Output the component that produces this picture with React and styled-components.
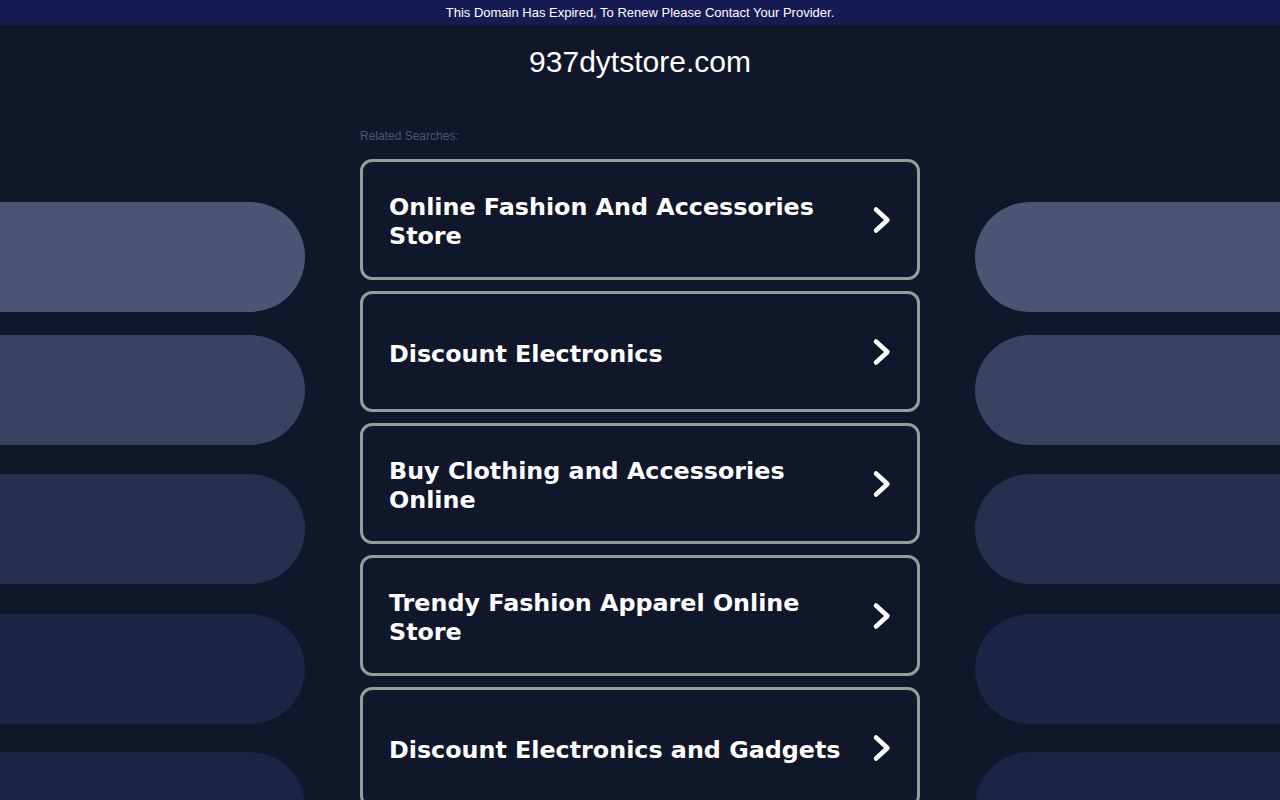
import styled, { createGlobalStyle } from "styled-components";

const GlobalStyle = createGlobalStyle`
  html, body {
    margin: 0;
    padding: 0;
    overflow: hidden;
    background: #11172b;
  }
  * {
    box-sizing: border-box;
  }
`;

const Page = styled.div`
  width: 1280px;
  min-height: 800px;
  background: #11172b;
  font-family: "Liberation Sans", Arial, sans-serif;
`;

const Banner = styled.div`
  height: 25px;
  line-height: 25px;
  background: #161b54;
  color: #ffffff;
  text-align: center;
  font-family: "Liberation Sans", Arial, sans-serif;
  font-size: 13px;
`;

const Title = styled.h1`
  margin: 0;
  padding-top: 19px;
  height: 55px;
  line-height: 36px;
  text-align: center;
  font-size: 30px;
  font-weight: normal;
  color: #ffffff;
`;

const Layout = styled.div`
  display: grid;
  grid-template-columns: 305px 1fr 305px;
  column-gap: 55px;
`;

const Side = styled.div`
  display: flex;
  flex-direction: column;
  padding-top: 122px;
`;

const Pill = styled.div`
  height: 110px;
  margin-top: ${(p) => p.$gap}px;
  background: ${(p) => p.$color};
  border-radius: ${(p) => (p.$right ? "55px 0 0 55px" : "0 55px 55px 0")};
`;

const Center = styled.main`
  display: flex;
  flex-direction: column;
  padding-top: 49px;
`;

const Label = styled.div`
  font-size: 12px;
  line-height: 14px;
  color: #4b5573;
  margin-bottom: 16px;
`;

const Cards = styled.ul`
  list-style: none;
  margin: 0;
  padding: 0;
  display: flex;
  flex-direction: column;
  gap: 11px;
`;

const Card = styled.li`
  height: 121px;
  border: 3px solid #9a9a9a;
  border-radius: 12px;
  display: flex;
  align-items: center;
  padding: 0 26px 0 26px;
  gap: 20px;
`;

const CardText = styled.span`
  flex: 1;
  padding-top: 5px;
  font-family: "DejaVu Sans", Verdana, sans-serif;
  font-weight: bold;
  font-size: 23.8px;
  line-height: 29px;
  color: #ffffff;
`;

const Chevron = () => (
  <svg width="20" height="30" viewBox="0 0 20 30">
    <path
      d="M5 4.5 L16.5 15 L5 25.5"
      fill="none"
      stroke="#ffffff"
      strokeWidth="4.5"
      strokeLinecap="round"
      strokeLinejoin="round"
    />
  </svg>
);

const pills = [
  { color: "#4b5573", gap: 0 },
  { color: "#394260", gap: 23 },
  { color: "#262f4d", gap: 29 },
  { color: "#1d2546", gap: 30 },
  { color: "#1b2444", gap: 28 },
];

const searches = [
  "Online Fashion And Accessories Store",
  "Discount Electronics",
  "Buy Clothing and Accessories Online",
  "Trendy Fashion Apparel Online Store",
  "Discount Electronics and Gadgets",
];

export default function App() {
  return (
    <Page>
      <GlobalStyle />
      <Banner>This Domain Has Expired, To Renew Please Contact Your Provider.</Banner>
      <Title>937dytstore.com</Title>
      <Layout>
        <Side>
          {pills.map((p, i) => (
            <Pill key={i} $color={p.color} $gap={p.gap} />
          ))}
        </Side>
        <Center>
          <Label>Related Searches:</Label>
          <Cards>
            {searches.map((s) => (
              <Card key={s}>
                <CardText>{s}</CardText>
                <Chevron />
              </Card>
            ))}
          </Cards>
        </Center>
        <Side>
          {pills.map((p, i) => (
            <Pill key={i} $color={p.color} $gap={p.gap} $right />
          ))}
        </Side>
      </Layout>
    </Page>
  );
}
